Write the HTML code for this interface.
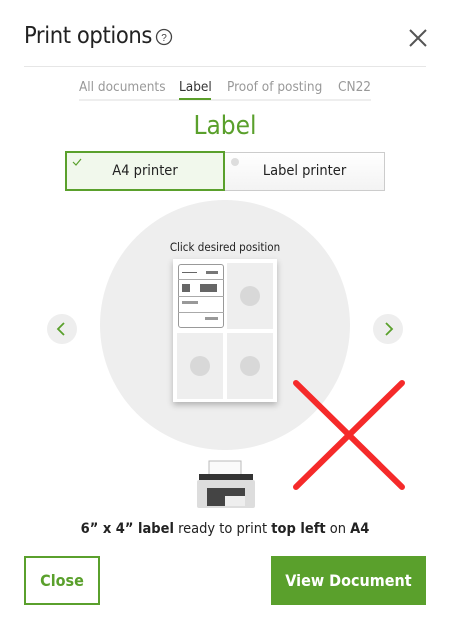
<!DOCTYPE html>
<html><head><style>
*{margin:0;padding:0;box-sizing:border-box}
body{width:450px;height:630px;background:#fff;font-family:"DejaVu Sans Condensed","Liberation Sans",sans-serif;position:relative;overflow:hidden;color:#222}
.a{position:absolute}
</style></head><body>
<div class="a" style="left:24px;top:21px;font-size:23.5px;color:#222;letter-spacing:-0.4px">Print options</div>
<svg class="a" style="left:155px;top:28px" width="18" height="18" viewBox="0 0 18 18"><circle cx="9" cy="9" r="7.5" fill="none" stroke="#444" stroke-width="1.3"/><text x="9" y="13" font-size="10" text-anchor="middle" fill="#444" font-family="Liberation Sans">?</text></svg>
<svg class="a" style="left:408px;top:28px" width="20" height="20"><path d="M2 2L18 18M18 2L2 18" stroke="#555" stroke-width="2"/></svg>
<div class="a" style="left:24px;top:66px;width:402px;height:1px;background:#e6e6e6"></div>
<div class="a" style="left:79px;top:99px;width:292px;height:2px;background:#eee"></div>
<div class="a" style="left:79px;top:79px;font-size:13.5px;color:#999;white-space:nowrap">All documents</div>
<div class="a" style="left:179px;top:79px;font-size:13.5px;color:#333">Label</div>
<div class="a" style="left:179px;top:98px;width:32px;height:2px;background:#5a9e2a"></div>
<div class="a" style="left:227px;top:79px;font-size:13.5px;color:#999;white-space:nowrap">Proof of posting</div>
<div class="a" style="left:338px;top:79px;font-size:13.5px;color:#999">CN22</div>
<div class="a" style="left:0;width:450px;top:111px;text-align:center;font-size:26px;color:#5aa02c">Label</div>
<div class="a" style="left:65px;top:151px;width:160px;height:40px;border:2px solid #5aa02c;background:#f1f8ec;text-align:center;line-height:36px;font-size:14.5px">A4 printer</div>
<svg class="a" style="left:72px;top:158px" width="10" height="8"><path d="M1 4L4 7L9 1" stroke="#5aa02c" stroke-width="1.2" fill="none"/></svg>
<div class="a" style="left:225px;top:152px;width:160px;height:39px;border:1px solid #ccc;border-left:none;background:linear-gradient(#fff,#f3f3f3);text-align:center;line-height:37px;font-size:14.5px">Label printer</div>
<div class="a" style="left:231px;top:158px;width:8px;height:8px;border-radius:50%;background:#ddd"></div>
<div class="a" style="left:100px;top:200px;width:250px;height:250px;border-radius:50%;background:#eee"></div>
<div class="a" style="left:0;width:450px;top:240px;text-align:center;font-size:11.5px;color:#222">Click desired position</div>
<div class="a" style="left:173px;top:259px;width:104px;height:143px;background:#fff;box-shadow:0 3px 6px rgba(0,0,0,.25)"></div>
<div class="a" style="left:178px;top:264px;width:46px;height:64px;border:1px solid #999;border-radius:3px;background:#fff"></div>
<div class="a" style="left:178px;top:279px;width:46px;height:1px;background:#aaa"></div>
<div class="a" style="left:178px;top:296px;width:46px;height:1px;background:#aaa"></div>
<div class="a" style="left:178px;top:312px;width:46px;height:1px;background:#aaa"></div>
<div class="a" style="left:182px;top:272px;width:15px;height:1px;background:#666"></div>
<div class="a" style="left:206px;top:271px;width:12px;height:3px;background:#777"></div>
<div class="a" style="left:182px;top:284px;width:8px;height:8px;background:#666"></div>
<div class="a" style="left:200px;top:284px;width:17px;height:8px;background:#666"></div>
<div class="a" style="left:182px;top:301px;width:16px;height:3px;background:#999"></div>
<div class="a" style="left:205px;top:317px;width:13px;height:3px;background:#999"></div>
<div class="a" style="left:227px;top:263px;width:46px;height:66px;background:#eee"></div>
<div class="a" style="left:177px;top:333px;width:46px;height:66px;background:#eee"></div>
<div class="a" style="left:227px;top:333px;width:46px;height:66px;background:#eee"></div>
<div class="a" style="left:240px;top:286px;width:20px;height:20px;border-radius:50%;background:#d8d8d8"></div>
<div class="a" style="left:190px;top:356px;width:20px;height:20px;border-radius:50%;background:#d8d8d8"></div>
<div class="a" style="left:240px;top:356px;width:20px;height:20px;border-radius:50%;background:#d8d8d8"></div>
<div class="a" style="left:47px;top:314px;width:30px;height:30px;border-radius:50%;background:#eee"></div>
<svg class="a" style="left:47px;top:314px" width="30" height="30"><path d="M17 9L11 15L17 21" stroke="#5aa02c" stroke-width="1.8" fill="none"/></svg>
<div class="a" style="left:373px;top:314px;width:30px;height:30px;border-radius:50%;background:#eee"></div>
<svg class="a" style="left:373px;top:314px" width="30" height="30"><path d="M13 9L19 15L13 21" stroke="#5aa02c" stroke-width="1.8" fill="none"/></svg>
<svg class="a" style="left:195px;top:460px" width="62" height="50">
<rect x="14" y="1" width="32" height="14" fill="#fafafa" stroke="#bbb"/>
<rect x="4" y="14" width="54" height="8" fill="#333"/>
<rect x="2" y="20" width="58" height="28" rx="2" fill="#ddd"/>
<rect x="12" y="28" width="38" height="18" fill="#444"/>
<rect x="30" y="36" width="20" height="10" fill="#eee"/>
</svg>
<svg class="a" style="left:290px;top:377px" width="120" height="116"><path d="M6 6L112 110M112 6L6 110" stroke="#f52a2a" stroke-width="6" stroke-linecap="round"/></svg>
<div class="a" style="left:0;width:450px;top:521px;text-align:center;font-size:14.5px;color:#222"><b>6” x 4” label</b> ready to print <b>top left</b> on <b>A4</b></div>
<div class="a" style="left:24px;top:556px;width:76px;height:49px;border:2px solid #5aa02c;color:#5aa02c;font-weight:bold;font-size:16px;text-align:center;line-height:45px">Close</div>
<div class="a" style="left:271px;top:556px;width:155px;height:49px;background:#5aa02c;color:#fff;font-weight:bold;font-size:16px;text-align:center;line-height:49px">View Document</div>
</body></html>
